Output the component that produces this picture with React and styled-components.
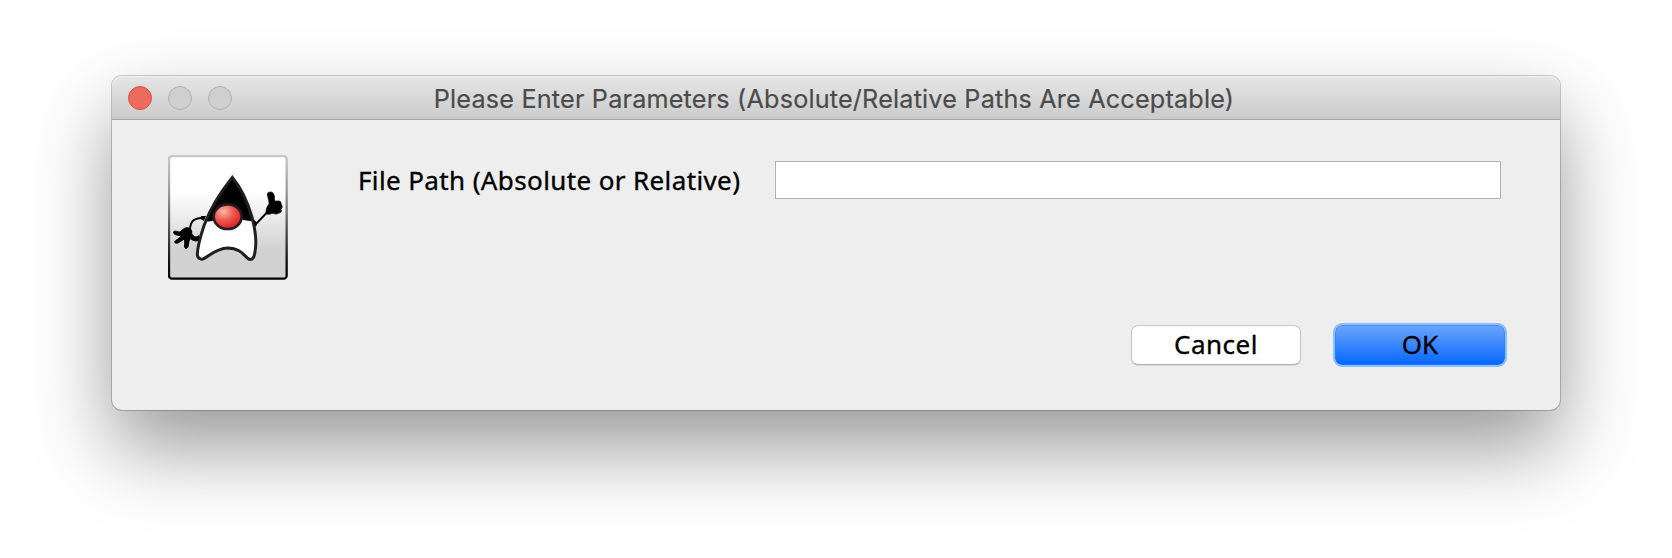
import React from 'react';
import styled, { createGlobalStyle } from 'styled-components';

const GlobalStyle = createGlobalStyle`
  * { box-sizing: border-box; }
  body { margin: 0; background: #fff; overflow: hidden; }
`;

const Desktop = styled.main`
  width: 1672px;
  height: 558px;
  padding: 76px 112px 0;
  overflow: hidden;
`;

const Dialog = styled.section`
  width: 1448px;
  height: 334px;
  display: flex;
  flex-direction: column;
  background: #eee;
  border-radius: 10px;
  box-shadow: 0 0 0 1px rgba(0, 0, 0, 0.2), 0 38px 80px rgba(0, 0, 0, 0.4);
`;

const TitleBar = styled.header`
  height: 44px;
  flex: none;
  display: grid;
  grid-template-columns: 192px 1fr 212px;
  align-items: center;
  padding: 0 0 0 16px;
  border-radius: 10px 10px 0 0;
  border-bottom: 1px solid #a5a5a5;
  background: linear-gradient(#e6e6e6, #cbcbcb);
  box-shadow: inset 0 1px 0 #f3f3f3;
`;

const Lights = styled.div`
  display: flex;
  gap: 16px;
`;

const Light = styled.span`
  width: 24px;
  height: 24px;
  border-radius: 50%;
  background: ${(p) => (p.$active ? '#ed6a5e' : '#cfcfcf')};
  border: 1px solid ${(p) => (p.$active ? '#d55448' : '#b0b0b0')};
`;

const Title = styled.h1`
  margin: 0;
  padding-top: 2px;
  justify-self: center;
  white-space: nowrap;
  font: 400 25.2px/32px Inter, sans-serif;
  letter-spacing: 0.19px;
  -webkit-text-stroke: 0.2px #4b4b4b;
  color: #4b4b4b;
`;

const Body = styled.div`
  flex: 1;
  display: flex;
  flex-direction: column;
  justify-content: space-between;
  padding: 35px 53px 43px 56px;
`;

const FormRow = styled.div`
  display: flex;
  align-items: flex-start;
`;

const Label = styled.label`
  width: 417px;
  margin: 6px 0 0 70px;
  white-space: nowrap;
  font: 400 26px/38px 'Noto Sans', sans-serif;
  letter-spacing: 0.38px;
  -webkit-text-stroke: 0.35px #000;
  color: #000;
`;

const Field = styled.input`
  width: 726px;
  height: 38px;
  margin: 6px 0 0;
  padding: 0 8px;
  border: 1px solid #b1b1b1;
  border-radius: 0;
  background: #fff;
  outline: none;
  font: 400 26px 'Noto Sans', sans-serif;
`;

const Actions = styled.div`
  display: flex;
  justify-content: flex-end;
  align-items: center;
  gap: 32px;
`;

const Button = styled.button`
  width: ${(p) => (p.$primary ? 174 : 170)}px;
  height: ${(p) => (p.$primary ? 44 : 40)}px;
  padding: 0 0 2px;
  font: 400 26px/36px 'Noto Sans', sans-serif;
  letter-spacing: ${(p) => (p.$primary ? 0 : 0.5)}px;
  -webkit-text-stroke: 0.35px #000;
  color: #000;
  border-radius: ${(p) => (p.$primary ? 9 : 7)}px;
  border: ${(p) => (p.$primary ? '2px solid #8fc0f5' : '1px solid #c6c6c6')};
  border-bottom-color: ${(p) => (p.$primary ? '#8fc0f5' : '#acacac')};
  background: ${(p) => (p.$primary ? 'linear-gradient(#6ba5fc, #0567ff) padding-box' : '#fff')};
  box-shadow: ${(p) => (p.$primary ? 'inset 0 0 0 1px rgba(30, 130, 255, 0.5)' : '0 1px 1px rgba(0, 0, 0, 0.08)')};
`;

const DukeSvg = styled.svg`
  flex: none;
  display: block;
`;

function Duke() {
  return (
    <DukeSvg width="120" height="126" viewBox="39 30 360 378" aria-label="Java">
      <defs>
        <linearGradient id="tile" x1="0" y1="0" x2="0" y2="1">
          <stop offset="0.3" stopColor="#fff" />
          <stop offset="0.75" stopColor="#d2d2d2" />
        </linearGradient>
        <linearGradient id="rim" x1="0" y1="0" x2="0" y2="1">
          <stop offset="0" stopColor="#c9c9c9" />
          <stop offset="0.3" stopColor="#999" />
          <stop offset="0.85" stopColor="#151515" />
          <stop offset="1" stopColor="#000" />
        </linearGradient>
        <radialGradient id="nose" cx="0.35" cy="0.3" r="0.7">
          <stop offset="0" stopColor="#fbb9a5" />
          <stop offset="0.5" stopColor="#ee5a50" />
          <stop offset="1" stopColor="#da2422" />
        </radialGradient>
      </defs>
      <rect x="42" y="33" width="353" height="368" rx="9" fill="url(#tile)" stroke="url(#rim)" strokeWidth="7" />
      <path d="M148 218 C118 219 106 226 105 254" fill="none" stroke="#000" strokeWidth="6" />
      <path d="M138 213 L153 213 L147 228 L138 223Z" />
      <path d="M302 238 L340 198" fill="none" stroke="#000" strokeWidth="6" />
      <path
        d="M132 272 C122 279 115 276 110 265 C112 255 105 247 94 248 C85 250 80 258 75 261 C68 261 62 257 57 259 C53 264 58 269 66 270 L79 273 C72 281 62 285 59 290 C60 297 68 296 77 289 L88 282 C91 291 87 302 90 309 C94 313 99 309 100 300 C102 292 101 286 107 281 C116 289 124 289 133 285Z"
        stroke="#000"
        strokeWidth="3"
      />
      <path
        d="M333 205 C332 192 337 184 342 177 C344 165 334 151 338 144 C344 139 353 140 356 147 C360 155 357 163 360 169 C368 167 375 167 378 172 C378 177 378 178 381 182 C383 187 380 190 378 193 C382 200 376 204 370 205 C362 210 357 205 351 205 C345 208 337 210 333 205Z"
        stroke="#000"
        strokeWidth="2"
      />
      <path d="M291 218 L306 233 Q307 242 300 245Z" />
      <path d="M153 229 C180 222 184 217 187 210 L250 210 C256 222 268 225 290 223 C300 255 307 284 300 320 C298 337 293 345 283 343 C270 337 259 309 218 309 C185 310 164 331 148 340 C137 346 127 340 127 329 C128 291 135 261 153 229Z" fill="#fff" />
      <path d="M232 94 C206 128 173 180 153 229 C170 231 183 225 190 212 L251 216 C259 226 276 227 294 229 C282 181 254 121 232 94Z" fill="#000" />
      <path d="M232 97 C199 138 165 193 148 239 C135 277 128 305 127 327 C127 340 137 346 148 340 C164 331 185 310 218 309 C259 309 270 337 283 343 C293 345 298 337 300 320 C307 284 300 249 290 213 C277 168 256 126 232 97Z" fill="none" stroke="#231f20" strokeWidth="9" strokeLinejoin="miter" />
      <ellipse cx="218" cy="215" rx="42" ry="37" fill="url(#nose)" stroke="#231f20" strokeWidth="8" />
    </DukeSvg>
  );
}

export default function App() {
  return (
    <Desktop>
      <GlobalStyle />
      <Dialog>
        <TitleBar>
          <Lights>
            <Light $active />
            <Light />
            <Light />
          </Lights>
          <Title>Please Enter Parameters (Absolute/Relative Paths Are Acceptable)</Title>
        </TitleBar>
        <Body>
          <FormRow>
            <Duke />
            <Label htmlFor="path">File Path (Absolute or Relative)</Label>
            <Field id="path" />
          </FormRow>
          <Actions>
            <Button>Cancel</Button>
            <Button $primary>OK</Button>
          </Actions>
        </Body>
      </Dialog>
    </Desktop>
  );
}
